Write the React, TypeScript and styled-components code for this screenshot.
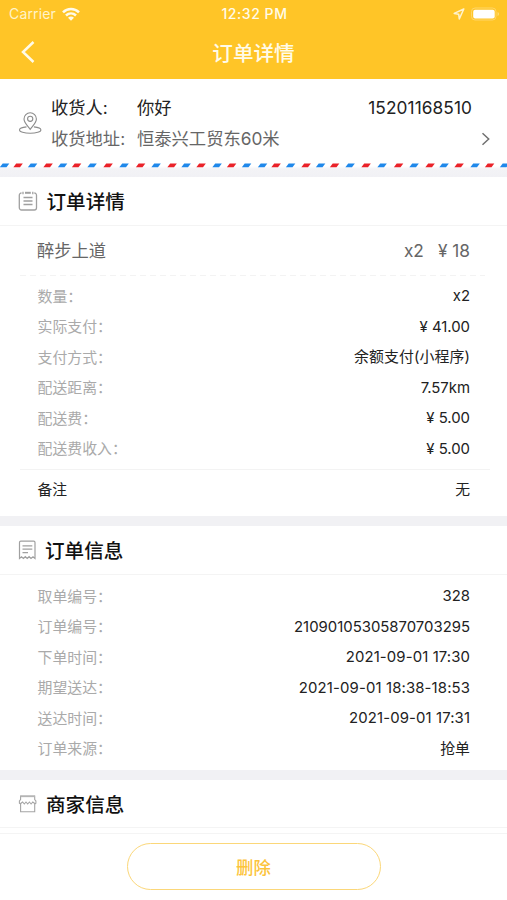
import React from "react";
import styled, { createGlobalStyle } from "styled-components";

const GlobalStyle = createGlobalStyle`
  * { box-sizing: border-box; }
  body {
    margin: 0;
    background: #fff;
    font-family: Inter, "Noto Sans CJK SC", sans-serif;
    color: #222;
  }
`;

const Screen = styled.div`
  width: 507px;
  height: 900px;
  overflow: hidden;
  display: flex;
  flex-direction: column;
  background: #fff;
`;

const Header = styled.header`
  height: 79px;
  flex: none;
  background: #ffc527;
  color: #fffbe9;
`;

const StatusBar = styled.div`
  height: 27px;
  display: grid;
  grid-template-columns: 1fr auto 1fr;
  align-items: center;
  padding: 0 7px 0 9px;
  line-height: 27px;
`;

const Carrier = styled.div`
  display: flex;
  align-items: center;
  gap: 6px;
  font-size: 14px;
  letter-spacing: 0.15px;
  color: #fff3c9;
`;

const Clock = styled.div`
  font-size: 14px;
  font-weight: 500;
  letter-spacing: 0.55px;
`;

const StatusIcons = styled.div`
  display: flex;
  align-items: center;
  justify-content: flex-end;
  gap: 6px;
`;

const NavBar = styled.div`
  height: 52px;
  display: grid;
  grid-template-columns: 50px 1fr 50px;
  align-items: center;
`;

const BackButton = styled.button`
  border: 0;
  background: none;
  padding: 0 0 2px 20px;
  height: 52px;
  display: flex;
  align-items: center;
`;

const NavTitle = styled.h1`
  margin: 0;
  padding-top: 2px;
  text-align: center;
  font-size: 20.6px;
  font-weight: 500;
  line-height: 50px;
`;

const Address = styled.section`
  height: 84px;
  flex: none;
  display: grid;
  grid-template-columns: 33px 1fr 20px;
  padding: 14px 15px 0 18px;
  font-size: 17.3px;
`;

const PinCell = styled.div`
  padding-top: 19px;
`;

const AddressLine = styled.div<{ $muted?: boolean }>`
  display: flex;
  height: 31px;
  line-height: ${(p) => (p.$muted ? 29 : 30)}px;
  white-space: nowrap;
  color: ${(p) => (p.$muted ? "#666" : "#222")};
`;

const AddressLabel = styled.span`
  width: 86px;
  flex: none;
`;

const Phone = styled.span`
  margin-left: auto;
  font-size: 17.3px;
  letter-spacing: 0.08px;
  line-height: 29px;
`;

const ArrowCell = styled.div`
  display: flex;
  justify-content: flex-end;
  padding: 39px 1px 0 0;
`;

const StripeBand = styled.div`
  height: 14px;
  flex: none;
  background: linear-gradient(#fff 0 3px, #f3f3f6 6px, #f1f1f5);
  svg { display: block; }
`;

const Divider = styled.div`
  height: 10px;
  flex: none;
  background: #f1f1f4;
`;

const SectionHead = styled.div<{ $gap?: number; $height?: number }>`
  height: ${(p) => p.$height ?? 49}px;
  flex: none;
  display: flex;
  align-items: center;
  gap: ${(p) => p.$gap ?? 9}px;
  padding-left: 18px;
  border-bottom: 1px solid #f4f4f4;
  svg { flex: none; }
`;

const SectionTitle = styled.h2`
  margin: 0;
  padding-top: 2px;
  font-size: 19.6px;
  font-weight: 500;
  line-height: 46px;
  color: #111;
`;

const Product = styled.div`
  height: 49px;
  flex: none;
  margin: 0 17px 0 20px;
  padding: 0 20px 0 17px;
  display: flex;
  align-items: center;
  justify-content: space-between;
  font-size: 17.3px;
  line-height: 49px;
  color: #666;
`;

const Price = styled.span`
  display: flex;
  gap: 14px;
`;

const DashLine = styled.div`
  height: 1px;
  flex: none;
  margin: 0 22px 0 20px;
  background: repeating-linear-gradient(90deg, #f3f3f3 0 6px, #fff 6px 10px);
`;

const Rows = styled.div<{ $top: number; $height: number }>`
  flex: none;
  height: ${(p) => p.$height}px;
  padding: ${(p) => p.$top}px 37px 0 37.5px;
`;

const Row = styled.div`
  height: 30.55px;
  line-height: 30.55px;
  display: flex;
  justify-content: space-between;
  font-size: 14.9px;
`;

const RowLabel = styled.span`
  color: #aaa;
  padding-top: 0.5px;
`;

const RowValue = styled.span<{ $spacing?: number }>`
  color: #222;
  letter-spacing: ${(p) => p.$spacing ?? 0}px;
  margin-right: ${(p) => -(p.$spacing ?? 0)}px;
`;

const Note = styled.div`
  height: 47px;
  flex: none;
  margin: 0 17px 0 20px;
  padding: 0 20px 0 17.5px;
  border-top: 1px solid #f3f3f3;
  display: flex;
  justify-content: space-between;
  font-size: 14.8px;
  line-height: 40px;
`;

const Footer = styled.footer`
  flex: 1;
  margin-top: 5px;
  border-top: 1px solid #f4f4f4;
  padding-top: 9px;
  display: flex;
  justify-content: center;
  align-items: flex-start;
`;

const DeleteButton = styled.button`
  width: 254px;
  height: 47px;
  border: 1.4px solid #fbd779;
  border-radius: 24px;
  background: #fff;
  color: #fcc43c;
  font-family: inherit;
  font-size: 17.4px;
  font-weight: 500;
  padding: 0;
`;

const WifiIcon = () => (
  <svg width="18" height="14" viewBox="0 0 18 14" fill="none" stroke="#fffbe9" strokeWidth="2.5">
    <path d="M1 5.3C5.5.8 12.5.8 17 5.3" />
    <path d="M4 8.5c2.9-2.8 7.1-2.8 10 0" />
    <path d="M9 13.7 6 10.8c1.8-1.6 4.2-1.6 6 0z" fill="#fffbe9" stroke="none" />
  </svg>
);

const LocationIcon = () => (
  <svg width="12" height="12" viewBox="0 0 12 12" fill="none" stroke="#fff3cf" strokeWidth="1.5" strokeLinejoin="round">
    <path d="M10.8 1 1.2 5.4l4.5.8.6 4.7z" />
  </svg>
);

const BatteryIcon = () => (
  <svg width="29" height="14" viewBox="0 0 29 14">
    <rect x=".5" y="1" width="24.5" height="12" rx="3.5" fill="none" stroke="#ffd668" />
    <rect x="2.2" y="2.7" width="21.5" height="8.8" rx="2" fill="#fff" />
    <path d="M26.6 5v4c1.7-.7 1.7-3.3 0-4z" fill="#ffdf85" />
  </svg>
);

const BackIcon = () => (
  <svg width="15" height="22" viewBox="0 0 15 22" fill="none" stroke="#fffbe9" strokeWidth="2.5">
    <path d="M13.5 1 3 11l10.5 10" />
  </svg>
);

const PinIcon = () => (
  <svg width="24" height="23" viewBox="0 0 24 23" fill="none" stroke="#8c8c8c" strokeWidth="1.1">
    <path d="M12.2 17.3C9.2 13.5 6 10.5 6 7a6.2 6.2 0 0 1 12.4 0c0 3.5-3.2 6.5-6.2 10.3z" />
    <circle cx="12.2" cy="6.8" r="2.6" />
    <path d="M8.5 14.9C4.5 15.3 1.5 16.4 1.5 17.9c0 1.9 4.7 3.4 10.7 3.4s10.7-1.5 10.7-3.4c0-1.5-3-2.6-7-3" />
  </svg>
);

const ArrowIcon = () => (
  <svg width="10" height="14" viewBox="0 0 10 14" fill="none" stroke="#707070" strokeWidth="1.5">
    <path d="m1.5 1.2 6.2 5.8-6.2 5.8" />
  </svg>
);

const ClipboardIcon = () => (
  <svg width="20" height="20" viewBox="0 0 20 20" fill="none" stroke="#a0a0a0" strokeWidth="1.3">
    <path d="M3.5 2A2.2 2.2 0 0 0 1.3 4.2v12.6A2.2 2.2 0 0 0 3.5 19h12.8a2.2 2.2 0 0 0 2.2-2.2V4.2A2.2 2.2 0 0 0 16.3 2" />
    <path d="M7 1.8h5.8" strokeWidth="2" />
    <path d="M5.5 6.5h9M5.5 10h9M5.5 13.5h9M5 .8v2.5M14.8 .8v2.5" />
  </svg>
);

const ReceiptIcon = () => (
  <svg width="19" height="20" viewBox="0 0 19 20" fill="none" stroke="#a0a0a0" strokeWidth="1.2">
    <path d="M1.5 18.5V2.5q0-1.3 1.3-1.3h12.9q1.3 0 1.3 1.3v16l-2-1.8-2 1.8-1.9-1.8-1.9 1.8-1.9-1.8-1.9 1.8-1.9-1.8z" />
    <path d="M4.5 5.8h9.8M4.5 9.2h9.8M4.5 12.7h5.5" />
  </svg>
);

const ShopIcon = () => (
  <svg width="19" height="19" viewBox="0 0 19 19" fill="none" stroke="#a5a5a5" strokeWidth="1.1">
    <path d="M2.6 1.5v4L1.4 7v2.2l1.2.8M16.7 1.5v4L17.9 7v2.2l-1.2.8" />
    <path d="M2.6 9.5l2-1.5 1.7 2 1.7-2 1.7 2 1.7-2 1.7 2 1.7-2 1.9 1.5" />
    <path d="M2.6 9v8.8h14.1V9" />
    <path d="M2.6 2.2h14.1" strokeWidth="1.9" stroke="#b5b5b5" />
  </svg>
);

const STRIPES = [
  4.5, 18, 32.5, 48, 62.5, 76.5, 92, 108, 124, 140.5, 156, 172, 186, 201, 217, 231.5, 246.5,
];
const STRIPE_PERIOD = 258;

const AirmailStripes = () => (
  <svg width="507" height="5" viewBox="0 0 507 5">
    {[0, STRIPE_PERIOD].map((offset) =>
      STRIPES.map((x, i) => (
        <path
          key={offset + x}
          d={`M${x + offset - 4.6} 4.2 L${x + offset - 1.8} .6 h6.6 l-2.8 3.6z`}
          fill={i % 2 === 0 ? "#1f88ea" : "#ea2229"}
        />
      )),
    )}
  </svg>
);

type Entry = { label: string; value: string; spacing?: number };

const paymentRows: Entry[] = [
  { label: "数量：", value: "x2" },
  { label: "实际支付：", value: "¥ 41.00" },
  { label: "支付方式：", value: "余额支付(小程序)", spacing: 0.1 },
  { label: "配送距离：", value: "7.57km" },
  { label: "配送费：", value: "¥ 5.00" },
  { label: "配送费收入：", value: "¥ 5.00" },
];

const infoRows: Entry[] = [
  { label: "取单编号：", value: "328" },
  { label: "订单编号：", value: "21090105305870703295" },
  { label: "下单时间：", value: "2021-09-01 17:30", spacing: 0.12 },
  { label: "期望送达：", value: "2021-09-01 18:38-18:53", spacing: 0.14 },
  { label: "送达时间：", value: "2021-09-01 17:31", spacing: 0.12 },
  { label: "订单来源：", value: "抢单" },
];

const Entries = ({ items }: { items: Entry[] }) => (
  <>
    {items.map((item) => (
      <Row key={item.label}>
        <RowLabel>{item.label}</RowLabel>
        <RowValue $spacing={item.spacing}>{item.value}</RowValue>
      </Row>
    ))}
  </>
);

export default function App() {
  return (
    <>
      <GlobalStyle />
      <Screen>
        <Header>
          <StatusBar>
            <Carrier>
              Carrier
              <WifiIcon />
            </Carrier>
            <Clock>12:32 PM</Clock>
            <StatusIcons>
              <LocationIcon />
              <BatteryIcon />
            </StatusIcons>
          </StatusBar>
          <NavBar>
            <BackButton aria-label="返回">
              <BackIcon />
            </BackButton>
            <NavTitle>订单详情</NavTitle>
          </NavBar>
        </Header>
        <Address>
          <PinCell>
            <PinIcon />
          </PinCell>
          <div>
            <AddressLine>
              <AddressLabel>收货人:</AddressLabel>
              <span>你好</span>
              <Phone>15201168510</Phone>
            </AddressLine>
            <AddressLine $muted>
              <AddressLabel>收货地址:</AddressLabel>
              <span>恒泰兴工贸东60米</span>
            </AddressLine>
          </div>
          <ArrowCell>
            <ArrowIcon />
          </ArrowCell>
        </Address>
        <StripeBand>
          <AirmailStripes />
        </StripeBand>
        <SectionHead $gap={8.5}>
          <ClipboardIcon />
          <SectionTitle>订单详情</SectionTitle>
        </SectionHead>
        <Product>
          <span>醉步上道</span>
          <Price>
            <span>x2</span>
            <span>¥ 18</span>
          </Price>
        </Product>
        <DashLine />
        <Rows $top={5} $height={193}>
          <Entries items={paymentRows} />
        </Rows>
        <Note>
          <span>备注</span>
          <span>无</span>
        </Note>
        <Divider />
        <SectionHead $gap={8}>
          <ReceiptIcon />
          <SectionTitle>订单信息</SectionTitle>
        </SectionHead>
        <Rows $top={6} $height={195}>
          <Entries items={infoRows} />
        </Rows>
        <Divider />
        <SectionHead $height={48}>
          <ShopIcon />
          <SectionTitle>商家信息</SectionTitle>
        </SectionHead>
        <Footer>
          <DeleteButton>删除</DeleteButton>
        </Footer>
      </Screen>
    </>
  );
}
